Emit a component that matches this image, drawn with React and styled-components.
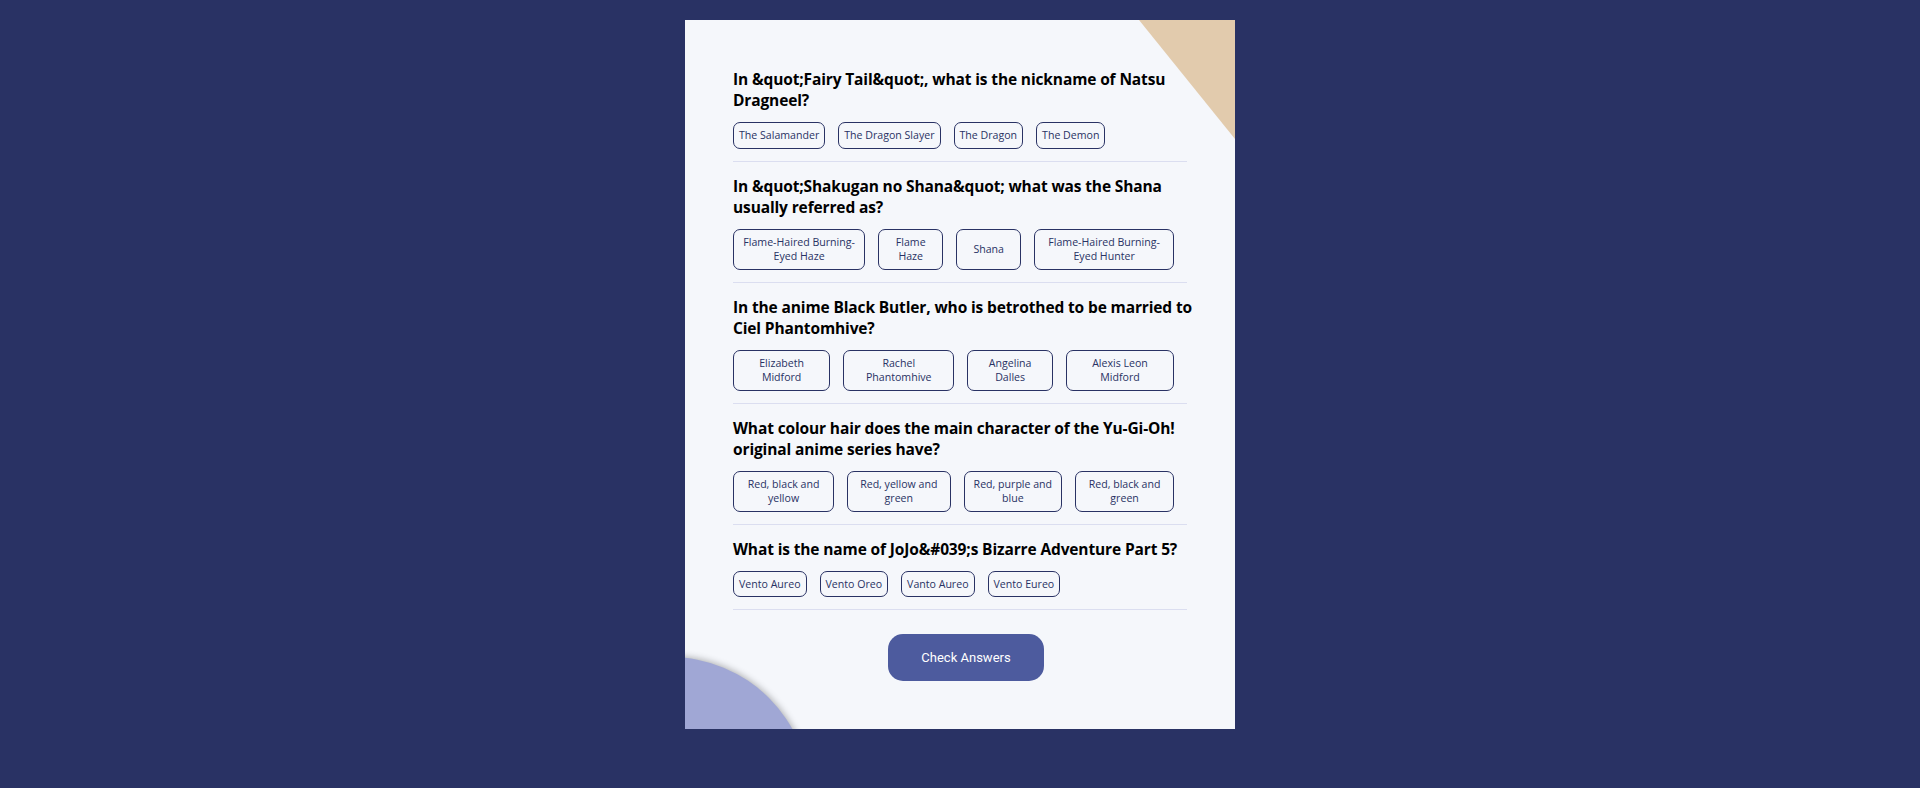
import React from 'react';
import styled, { createGlobalStyle } from 'styled-components';

const GlobalStyle = createGlobalStyle`
  body {
    margin: 0;
    background: #293264;
    font-family: "Open Sans", "Noto Sans", sans-serif;
  }
`

const Page = styled.div`
  display: flex;
  justify-content: center;
  align-items: flex-start;
  padding-top: 20px;
  min-height: 100vh;
  box-sizing: border-box;
`

const Card = styled.main`
  position: relative;
  overflow: hidden;
  width: 550px;
  box-sizing: border-box;
  padding: 35px 48px 48px;
  background: #f5f7fb;
`

const CornerBlob = styled.div`
  position: absolute;
  top: 0;
  right: 0;
  width: 96px;
  height: 119px;
  background: #e2cbad;
  clip-path: polygon(0 0, 100% 0, 100% 100%);
`

const BottomBlob = styled.div`
  position: absolute;
  left: -155px;
  top: 637px;
  width: 280px;
  height: 280px;
  border-radius: 50%;
  background: #a0a7d5;
  box-shadow: 0 0 7px 1px rgba(0, 0, 0, 0.3);
`

const Question = styled.section`
  position: relative;
  padding: 13.5px 0 12.5px;
  border-bottom: 1px solid #dbdef0;
`

const Title = styled.h2`
  margin: 0 -14px 11px 0;
  font-size: 15.5px;
  line-height: 21px;
  font-weight: 700;
  letter-spacing: -0.13px;
  color: #000;
`

const Answers = styled.div`
  display: flex;
`

const Answer = styled.button`
  flex: 0 1 auto;
  min-width: 65px;
  margin-right: 13px;
  padding: ${props => (props.$short ? '5px' : '5.5px')} 5px;
  border: 1px solid #293264;
  border-radius: 7px;
  background: transparent;
  color: #293264;
  font-family: "Open Sans", "Noto Sans", sans-serif;
  font-size: 10.6px;
  line-height: 14px;
  text-align: center;
  cursor: pointer;
`

const Footer = styled.div`
  display: flex;
  justify-content: center;
  padding: 24px 0 0 12px;
`

const CheckButton = styled.button`
  width: 156px;
  height: 47px;
  border: none;
  border-radius: 15px;
  background: #4d5b9e;
  color: #fff;
  font-family: Roboto, "Liberation Sans", sans-serif;
  font-size: 13px;
  font-weight: 400;
  cursor: pointer;
`

const questions = [
  {
    text: 'In &quot;Fairy Tail&quot;, what is the nickname of Natsu Dragneel?',
    answers: ['The Salamander', 'The Dragon Slayer', 'The Dragon', 'The Demon'],
  },
  {
    text: 'In &quot;Shakugan no Shana&quot; what was the Shana usually referred as?',
    answers: ['Flame-Haired Burning-Eyed Haze', 'Flame Haze', 'Shana', 'Flame-Haired Burning-Eyed Hunter'],
  },
  {
    text: 'In the anime Black Butler, who is betrothed to be married to Ciel Phantomhive?',
    answers: ['Elizabeth Midford', 'Rachel Phantomhive', 'Angelina Dalles', 'Alexis Leon Midford'],
  },
  {
    text: 'What colour hair does the main character of the Yu-Gi-Oh! original anime series have?',
    answers: ['Red, black and yellow', 'Red, yellow and green', 'Red, purple and blue', 'Red, black and green'],
  },
  {
    text: 'What is the name of JoJo&#039;s Bizarre Adventure Part 5?',
    answers: ['Vento Aureo', 'Vento Oreo', 'Vanto Aureo', 'Vento Eureo'],
    short: true,
  },
];

const App = () => {
  return (
    <Page>
      <GlobalStyle />
      <Card>
        <CornerBlob />
        <BottomBlob />
        {questions.map(q => (
          <Question key={q.text}>
            <Title>{q.text}</Title>
            <Answers>
              {q.answers.map(a => (
                <Answer key={a} $short={q.short}>{a}</Answer>
              ))}
            </Answers>
          </Question>
        ))}
        <Footer>
          <CheckButton>Check Answers</CheckButton>
        </Footer>
      </Card>
    </Page>
  );
}

export default App;
